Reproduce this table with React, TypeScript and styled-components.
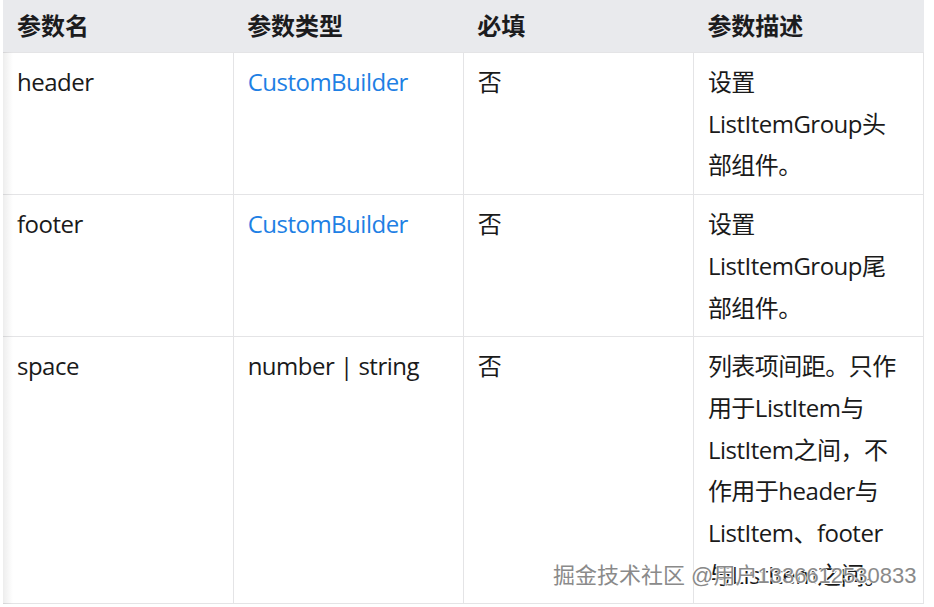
import React from 'react';
import styled, { createGlobalStyle } from 'styled-components';

const GlobalStyle = createGlobalStyle`
  body {
    margin: 0;
    background: #ffffff;
    font-family: "Open Sans", "Noto Sans CJK SC", sans-serif;
  }
`;

const Page = styled.div`
  position: relative;
  width: 934px;
  height: 607px;
  overflow: hidden;
  padding-left: 3px;
  box-sizing: border-box;
`;

const ScrollBox = styled.div`
  position: relative;
  width: 921px;

  &::before {
    content: '';
    position: absolute;
    left: 0;
    top: 52px;
    bottom: 0;
    width: 10px;
    background: linear-gradient(to right, rgba(0, 0, 0, 0.07), rgba(0, 0, 0, 0));
    pointer-events: none;
  }
`;

const Table = styled.table`
  width: 921px;
  table-layout: fixed;
  border-collapse: collapse;
  font-size: 24px;
  letter-spacing: -0.5px;
  color: #1a1a1a;
`;

const HeadCell = styled.th`
  height: 48px;
  padding: 0 14px 4px;
  text-align: left;
  font-weight: 700;
  background: #e9eaed;
  color: #1c1c1e;
  letter-spacing: 0;
  font-family: "Noto Sans CJK SC", sans-serif;
`;

const Cell = styled.td`
  padding: 8px 22px 8px 14px;
  line-height: 41.7px;
  vertical-align: top;
  border: 1px solid #e4e4e6;
  &:first-child {
    border-left: none;
  }
`;

const TypeLink = styled.a`
  color: #1e80e4;
  text-decoration: none;
`;

const Watermark = styled.div`
  position: absolute;
  left: 553px;
  top: 561px;
  font-size: 22px;
  line-height: 30px;
  color: #8a8a8a;
  white-space: nowrap;
  font-family: "Liberation Sans", "Noto Sans CJK SC", sans-serif;
  text-shadow: 1px 1px 0 #ffffff, -1px -1px 0 rgba(255, 255, 255, 0.8);
`;

interface Row {
  name: string;
  type: string;
  link?: boolean;
  required: string;
  desc: string;
}

const rows: Row[] = [
  { name: 'header', type: 'CustomBuilder', link: true, required: '否', desc: '设置ListItemGroup头部组件。' },
  { name: 'footer', type: 'CustomBuilder', link: true, required: '否', desc: '设置ListItemGroup尾部组件。' },
  {
    name: 'space',
    type: 'number | string',
    required: '否',
    desc: '列表项间距。只作用于ListItem与ListItem之间，不作用于header与ListItem、footer与ListItem之间。',
  },
];

const App = () => {
  return (
    <Page>
      <GlobalStyle />
      <ScrollBox>
        <Table>
          <thead>
            <tr>
              <HeadCell>参数名</HeadCell>
              <HeadCell>参数类型</HeadCell>
              <HeadCell>必填</HeadCell>
              <HeadCell>参数描述</HeadCell>
            </tr>
          </thead>
          <tbody>
            {rows.map(r => (
              <tr key={r.name}>
                <Cell>{r.name}</Cell>
                <Cell>{r.link ? <TypeLink href="#">{r.type}</TypeLink> : r.type}</Cell>
                <Cell>{r.required}</Cell>
                <Cell>{r.desc}</Cell>
              </tr>
            ))}
          </tbody>
        </Table>
      </ScrollBox>
      <Watermark>掘金技术社区 @用户1336612530833</Watermark>
    </Page>
  );
};

export default App;
